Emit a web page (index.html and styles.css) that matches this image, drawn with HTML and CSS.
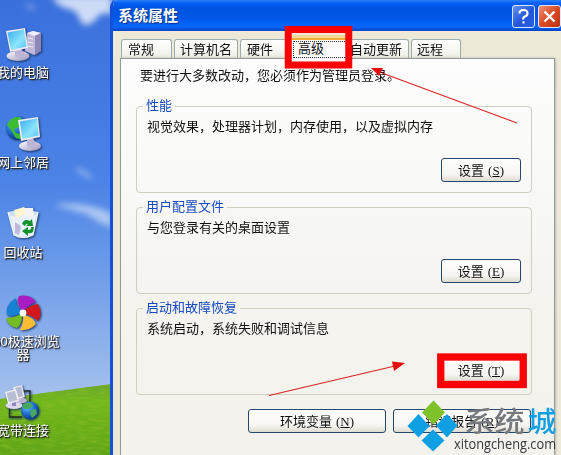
FILE: index.html
```
<!DOCTYPE html>
<html lang="zh-CN">
<head>
<meta charset="utf-8">
<title>系统属性</title>
<link rel="stylesheet" href="styles.css">
</head>
<body>
<main class="desktop">
  <svg class="wallpaper" width="112" height="455" viewBox="0 0 112 455" aria-hidden="true">
    <defs>
      <linearGradient id="sky" x1="0" y1="0" x2="0" y2="1">
        <stop offset="0" stop-color="#3a70dc"/><stop offset=".4" stop-color="#4b83e6"/>
        <stop offset=".62" stop-color="#739fe9"/><stop offset=".86" stop-color="#a3bfed"/><stop offset="1" stop-color="#b4cbed"/>
      </linearGradient>
      <linearGradient id="grass" x1="0" y1="0" x2="0" y2="1">
        <stop offset="0" stop-color="#6ba52e"/><stop offset=".25" stop-color="#72b81c"/><stop offset="1" stop-color="#5fa416"/>
      </linearGradient>
      <filter id="cloud" x="-50%" y="-50%" width="200%" height="200%"><feGaussianBlur stdDeviation="3"/></filter>
      <filter id="blades" x="0" y="0" width="100%" height="100%">
        <feTurbulence type="fractalNoise" baseFrequency=".09 .4" numOctaves="2" seed="4"/>
        <feColorMatrix values="0 0 0 0 .25  0 0 0 0 .5  0 0 0 0 .02  1.4 0 0 0 -.55"/>
        <feComposite in2="SourceGraphic" operator="in"/>
      </filter>
    </defs>
    <rect width="112" height="455" fill="url(#sky)"/>
    <g fill="#fff" filter="url(#cloud)">
      <path d="M52-4H112V15Q101 11 97 18Q89 28 81 23Q79 12 70 9Q57 8 52-4Z" opacity=".75"/>
      <path d="M24 4q8-2 12 4q-5 5-12-4Z" opacity=".3"/>
      <path d="M74 167q10 0 20 12q-10 0-20-12Z" opacity=".4"/>
      <path d="M54 205Q80 200 112 213V228Q98 222 86 214Z" opacity=".5"/>
    </g>
    <path d="M0 399Q50 392 112 384V455H0Z" fill="url(#grass)"/>
    <path d="M0 399Q50 392 112 384V455H0Z" filter="url(#blades)"/>
  </svg>

  <svg width="0" height="0" class="defs" aria-hidden="true">
    <defs>
      <linearGradient id="screen" x1="0" y1="0" x2="1" y2="1"><stop stop-color="#36a9f1"/><stop offset=".6" stop-color="#8be5fb"/><stop offset="1" stop-color="#54bff2"/></linearGradient>
      <linearGradient id="shell" x1="0" y1="0" x2="1" y2="1"><stop stop-color="#fff"/><stop offset="1" stop-color="#9a91bb"/></linearGradient>
      <radialGradient id="globe" cx=".35" cy=".3" r=".75"><stop stop-color="#6cc4fb"/><stop offset=".5" stop-color="#2271d0"/><stop offset="1" stop-color="#073280"/></radialGradient>
    </defs>
  </svg>

  <div class="shortcut computer">
    <svg width="38" height="36" viewBox="0 0 38 36">
      <path d="M21 6 27 4 35 6 35 24 28 28 19 24Z" fill="#bfb8da"/>
      <path d="M21 6 27 4 35 6 28 9Z" fill="#efedf8"/><path d="M29 9 35 6 35 24 29 28Z" fill="#8f87b8"/>
      <path d="m22 11 5 1m-5 3 5 1m-5 3 5 1" stroke="#eee"/>
      <ellipse cx="12" cy="29" rx="11.500" ry="5" fill="url(#shell)"/><path d="M9 21h6l4 8q-5 3-10 0Z" fill="#bdb5d5"/>
      <path d="M0 4 19 1 22 21 4 25Z" fill="#eeeaf7"/><path d="M1.500 5.500 18 2.500 20.500 19.500 5 23Z" fill="url(#screen)"/>
    </svg><span>我的电脑</span>
  </div>
  <div class="shortcut network">
    <svg width="38" height="38" viewBox="0 0 38 38">
      <circle cx="11.500" cy="13" r="11.500" fill="url(#globe)"/>
      <path d="M1 10Q5 1 14 2L18 7 13 12 8 14 10 18 14 19 15 24Q9 24 8 20L5 15Z" fill="#3dbb32"/>
      <ellipse cx="24" cy="31" rx="11" ry="5" fill="url(#shell)"/><path d="M21 23h6l4 8q-5 3-10 0Z" fill="#bdb5d5"/>
      <path d="M12 5 32 2 34 22 15 26Z" fill="#eeeaf7"/><path d="M14 6.500 31 3.500 32.500 20.500 16.500 24Z" fill="url(#screen)"/>
    </svg><span>网上邻居</span>
  </div>
  <div class="shortcut recycle">
    <svg width="34" height="34" viewBox="0 0 34 34">
      <path d="M2 6 17 3 32 6 27 29Q17 35 8 29Z" fill="#d5eafa" opacity=".94"/>
      <path d="m8 4 10-3 5 6-2 6H10Z" fill="#fff5d0"/><path d="M18 2h9l1 9-10 2Z" fill="#f5f3ef"/>
      <path d="M4 9 12 12 18 8 24 12 30 8 27 28Q17 33 9 28Z" fill="#e9f2fb"/>
      <path d="m9 16 6 4-2 9-4-2Z" fill="#c0b8dc"/>
      <path d="M16 18q2-6 8-3l2-2 1 7h-7l2-2q-2-1-3 2Zm13 3q0 7-7 6v3l-6-5 6-4v3q4 0 3-3Z" fill="#16912f"/>
      <path d="M2 6 8 29Q17 34 27 29L32 6" fill="none" stroke="#f6fcff" stroke-width="1.200"/>
    </svg><span>回收站</span>
  </div>
  <div class="shortcut browser">
    <svg width="36" height="36" viewBox="-18 -18 36 36">
      <path d="M-1-2Q-7-11-4-17Q7-19 13-11Q5-8 1-2Z" fill="#a91bc3"/>
      <path d="M1-2Q7-8 15-9Q20 1 15 8Q8 2 2 1Z" fill="#d3171c"/>
      <path d="M2 2Q11 5 13 11Q7 18-3 17Q1 9 0 2Z" fill="#f9bd35"/>
      <path d="M-1 3Q-1 11-6 15Q-15 13-17 5Q-9 5-2 1Z" fill="#73bd22"/>
      <path d="M-2 1Q-11 4-16 2Q-18-9-7-15Q-8-7-1-2Z" fill="#1782d4"/>
      <circle r="3.400" fill="#fff"/>
    </svg><span>360极速浏览<br>器</span>
  </div>
  <div class="shortcut broadband">
    <svg width="36" height="36" viewBox="0 0 36 36">
      <path d="M17 6H25V18M4.500 22V32H17" fill="none" stroke="#222c23" stroke-width="1.300"/>
      <ellipse cx="16" cy="15.500" rx="6" ry="3" fill="#bbb2d2"/><path d="M8 2 17 0 20 12 10 15Z" fill="#e9e7f1"/><path d="m10 3 6-1.500 2 9.500-7 2Z" fill="#b4bbd0"/>
      <ellipse cx="9" cy="20.500" rx="8.500" ry="3.500" fill="#dcd8ea"/><path d="M7 17h4v4H7Z" fill="#8e88c8"/>
      <path d="M0 7 11 4 14 16 3 19Z" fill="#f1eff7"/><path d="M1.500 8 10 5.700 12.300 15 4 17.300Z" fill="#b9bfd2"/>
      <circle cx="25" cy="25.500" r="9" fill="url(#globe)"/>
      <path d="M17 22Q20 16 26 18L28 21 24 24 20 24ZM26 25 31 24 32 29 27 33 25 29Z" fill="#49a860"/>
    </svg><span>宽带连接</span>
  </div>

  <section class="window">
    <header class="titlebar">
      <h1>系统属性</h1>
      <button class="caption help" aria-label="帮助"><svg width="21" height="21" viewBox="0 0 21 21"><path d="M6.500 7.500Q6.500 4 10.500 4T14.500 7.500Q14.500 9.500 12 10.500T10.500 13.500M10.500 15.200V17.500" fill="none" stroke="#fff" stroke-width="2.200"/></svg></button>
      <button class="caption close" aria-label="关闭"><svg width="21" height="21" viewBox="0 0 21 21"><path d="m5.500 5.500 10 10m0-10-10 10" fill="none" stroke="#fff" stroke-width="2.400"/></svg></button>
    </header>
    <nav class="tabs">
      <span class="tab short">常规</span>
      <span class="tab wide">计算机名</span>
      <span class="tab short">硬件</span>
      <span class="tab active"><b>高级</b></span>
      <span class="tab update">自动更新</span>
      <span class="tab short last">远程</span>
    </nav>
    <div class="page">
      <p class="notice">要进行大多数改动，您必须作为管理员登录。</p>
      <section class="group">
        <h2>性能</h2>
        <p>视觉效果，处理器计划，内存使用，以及虚拟内存</p>
        <button class="btn">设置<i>(<u>S</u>)</i></button>
      </section>
      <section class="group profiles">
        <h2>用户配置文件</h2>
        <p>与您登录有关的桌面设置</p>
        <button class="btn">设置<i>(<u>E</u>)</i></button>
      </section>
      <section class="group recovery">
        <h2>启动和故障恢复</h2>
        <p>系统启动，系统失败和调试信息</p>
        <button class="btn marked">设置<i>(<u>T</u>)</i></button>
      </section>
      <footer class="actions">
        <button class="btn">环境变量<i>(<u>N</u>)</i></button>
        <button class="btn">错误报告<i>(<u>R</u>)</i></button>
      </footer>
    </div>
  </section>

  <svg class="overlay" width="561" height="455" viewBox="0 0 561 455">
    <rect x="288.250" y="29.500" width="60.500" height="35.500" fill="none" stroke="#fb0000" stroke-width="7"/>
    <rect x="440.750" y="357" width="82.500" height="27.500" fill="none" stroke="#fb0000" stroke-width="7.300"/>
    <g stroke="#d82222" stroke-width="1.100" fill="#e60d0d">
      <path d="M517 123 382 73"/><path d="M371 68 383 68 379 76Z" stroke="none"/>
      <path d="M269 395.500 395 366"/><path d="M405 363 392 361.500 394 371Z" stroke="none"/>
    </g>
    <path d="m433.500 400.500 11.500 12-11.500 12-11.500-12Z" fill="#7fc128"/>
    <g fill="#0f9fe3"><path d="m418.500 414 11 12-11 11.500-11-11.500Z"/><path d="m447 414 10.500 11.500-10.500 12-11-12Z"/><path d="m433 429.500 11.500 11-11.500 11-11.500-11Z"/></g>
    <text class="brand" x="464.500" y="431.500" textLength="60" lengthAdjust="spacingAndGlyphs" fill="#75787c">系统</text>
    <text class="brand" x="527.500" y="431.500" textLength="29" lengthAdjust="spacingAndGlyphs" fill="#159fe3">城</text>
    <text class="domain" x="454" y="449" textLength="102" lengthAdjust="spacingAndGlyphs">xitongcheng.com</text>
  </svg>
</main>
</body>
</html>
```
FILE: styles.css
```
* { box-sizing: border-box; }
body { margin: 0; font: 13px/16px "Liberation Sans", "Noto Sans CJK SC", sans-serif; color: #111; }
h1, h2, p { margin: 0; }
button { font: inherit; color: inherit; padding: 0; }
.desktop { position: relative; width: 561px; height: 455px; overflow: hidden; background: #4b83e6; }
.wallpaper, .overlay { position: absolute; left: 0; top: 0; }
.overlay { pointer-events: none; }
.defs { position: absolute; }

.shortcut {
  position: absolute; width: 80px; left: -17px;
  display: flex; flex-direction: column; align-items: center;
  color: #fff; line-height: 13px; text-align: center; white-space: nowrap;
  text-shadow: 1px 1px 1px #222, 1px 1px 2px #222;
}
.shortcut svg { filter: drop-shadow(1px 1px 1px #1b3564); }
.computer { top: 27px; gap: 3px; }
.computer svg, .network svg { margin-left: 3px; }
.network { top: 115px; gap: 3px; }
.recycle { top: 206px; gap: 6px; }
.browser { top: 295px; gap: 4px; }
.broadband { top: 385px; gap: 3px; }

.window {
  position: absolute; left: 110px; top: 0; width: 451px; height: 455px;
  background: #ece9d8; border-left: 3px solid #1551d8;
  border-top-left-radius: 7px; overflow: hidden;
  display: flex; flex-direction: column;
}
.titlebar {
  flex: 0 0 31px; margin-left: -3px; padding: 1px 0 0 8px;
  display: flex; align-items: center; gap: 3px;
  background: linear-gradient(#2a80f4 0, #0660f2 3px, #0054e3 8px, #0057e8 18px, #0566fb 25px, #0560f0 28px, #0040bd 31px);
}
.titlebar h1 { flex: 1; font-size: 15px; line-height: 18px; font-weight: 700; color: #fff; text-shadow: 1px 1px 1px #062c80; }
.caption { flex: none; width: 23px; height: 23px; border: 1px solid #dce7ff; border-radius: 3px; }
.caption svg { display: block; }
.help { background: linear-gradient(135deg, #6494f4, #2254d7 55%, #2861e5); }
.close { background: linear-gradient(135deg, #ee9276, #db4a25 50%, #bd3311); }

.tabs { flex: 0 0 27px; display: flex; align-items: flex-end; gap: 2px; padding-left: 8px; }
.tab {
  height: 19px; padding: 2px 0 0 6px; line-height: 16px; white-space: nowrap;
  border: 1px solid #9babac; border-bottom: 0; border-radius: 3px 3px 0 0;
  background: linear-gradient(#fff, #f4f4ee 70%, #e8e7de);
}
.short { width: 51px; }
.wide { width: 64px; padding-left: 5px; }
.active {
  width: 56px; height: 25px; margin: 0 1px -2px -1px; padding: 3px 1px 0; position: relative;
  border: 0; background: linear-gradient(#f9d796 3px, #f2ad36 3px, #f2ad36 5px, #fcfcfe 5px);
}
.active b { display: block; height: 17px; margin-top: 3px; padding-left: 4px; font-weight: 400; line-height: 13px; border: 1px dotted #333; }
.update { width: 59px; margin-left: -1px; padding-left: 0; border-left: 0; }
.last { padding-left: 5px; width: 50px; }

.page {
  flex: 1; width: 435px; margin-left: 7px; padding: 9px 21px 0 15px;
  border: 1px solid #919b9c; border-bottom: 0; box-shadow: 1px 0 2px #bebcab;
  background: linear-gradient(#fdfdfd, #f9f9f7 30%, #f4f3ee 65%, #f3f2ed);
}
.notice { padding-left: 4px; height: 38px; line-height: 16px; }
.group {
  width: 396px; height: 87px; margin-bottom: 14px; padding: 0 10px;
  border: 1px solid #cfcfbf; border-radius: 4px;
  display: flex; flex-direction: column; align-items: flex-start;
}
.group h2 {
  margin: -9px 0 0 -4px; padding: 0 3px; font-size: 13px; font-weight: 400;
  line-height: 16px; color: #164bc1; background: #fbfbfa;
}
.group.profiles h2 { background: #f8f7f5; }
.group.recovery h2 { background: #f4f3ee; }
.group p { margin-top: 5px; }
.group .btn { align-self: flex-end; width: 80px; margin-top: 23px; }
.group .marked { margin-top: 21px; }
.btn {
  height: 24px; border: 1px solid #25476f; border-radius: 3px;
  background: linear-gradient(#fff, #f6f5f1 70%, #dedbd0);
  text-align: center; line-height: 21px; white-space: nowrap;
}
.btn i { margin-left: 4px; font-family: "Liberation Serif", serif; font-style: normal; font-size: 13px; }
.btn u { text-underline-offset: 1px; }
.actions { display: flex; gap: 7px; padding-left: 112px; margin-top: 1px; }
.actions .btn { width: 138px; flex: none; }

.brand { font: 500 28px "Noto Sans CJK SC", sans-serif; }
.domain { font: 14px "Open Sans", sans-serif; fill: #34373a; }
```
